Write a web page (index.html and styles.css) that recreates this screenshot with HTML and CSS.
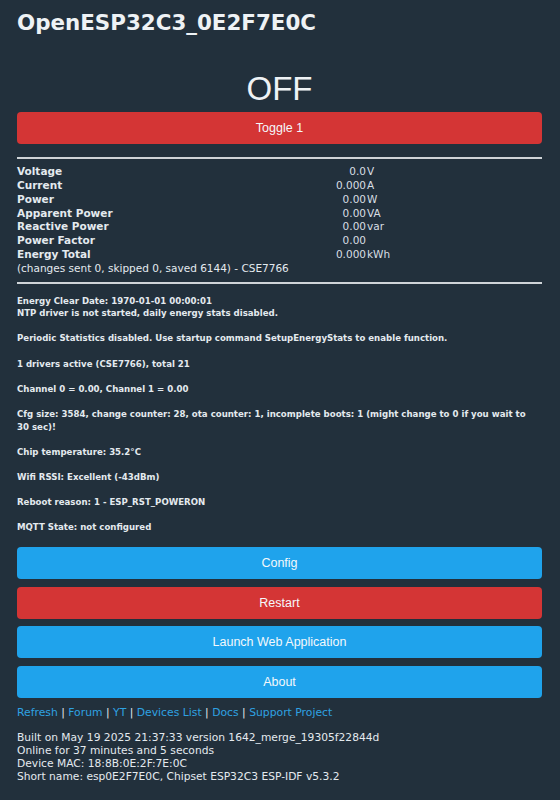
FILE: index.html
```html
<!DOCTYPE html>
<html lang="en">
<head>
<meta charset="utf-8">
<title>OpenESP32C3_0E2F7E0C</title>
<link rel="stylesheet" href="styles.css">
</head>
<body>
<div class="page">
  <h1 class="title">OpenESP32C3_0E2F7E0C</h1>
  <div class="state">OFF</div>
  <button class="btn btn-red toggle">Toggle 1</button>
  <hr class="rule rule-top">
  <div class="energy">
    <b class="lbl">Voltage</b><span class="val">0.0</span><span class="unit">V</span>
    <b class="lbl">Current</b><span class="val">0.000</span><span class="unit">A</span>
    <b class="lbl">Power</b><span class="val">0.00</span><span class="unit">W</span>
    <b class="lbl">Apparent Power</b><span class="val">0.00</span><span class="unit">VA</span>
    <b class="lbl">Reactive Power</b><span class="val">0.00</span><span class="unit">var</span>
    <b class="lbl">Power Factor</b><span class="val">0.00</span><span class="unit"></span>
    <b class="lbl">Energy Total</b><span class="val">0.000</span><span class="unit">kWh</span>
    <span class="note">(changes sent 0, skipped 0, saved 6144) - CSE7766</span>
  </div>
  <hr class="rule rule-bottom">
  <div class="info">
    <p>Energy Clear Date: 1970-01-01 00:00:01<br>NTP driver is not started, daily energy stats disabled.</p>
    <p>Periodic Statistics disabled. Use startup command SetupEnergyStats to enable function.</p>
    <p>1 drivers active (CSE7766), total 21</p>
    <p>Channel 0 = 0.00, Channel 1 = 0.00</p>
    <p>Cfg size: 3584, change counter: 28, ota counter: 1, incomplete boots: 1 (might change to 0 if you wait to 30 sec)!</p>
    <p>Chip temperature: 35.2°C</p>
    <p>Wifi RSSI: Excellent (-43dBm)</p>
    <p>Reboot reason: 1 - ESP_RST_POWERON</p>
    <p>MQTT State: not configured</p>
  </div>
  <div class="actions">
    <button class="btn btn-blue">Config</button>
    <button class="btn btn-red">Restart</button>
    <button class="btn btn-blue">Launch Web Application</button>
    <button class="btn btn-blue">About</button>
  </div>
  <div class="links">
    <a href="#">Refresh</a> | <a href="#">Forum</a> | <a href="#">YT</a> | <a href="#">Devices List</a> | <a href="#">Docs</a> | <a href="#">Support Project</a>
  </div>
  <div class="footer">
    Built on May 19 2025 21:37:33 version 1642_merge_19305f22844d<br>
    Online for 37 minutes and 5 seconds<br>
    Device MAC: 18:8B:0E:2F:7E:0C<br>
    Short name: esp0E2F7E0C, Chipset ESP32C3 ESP-IDF v5.3.2
  </div>
</div>
</body>
</html>
```

FILE: styles.css
```css
html, body {
  margin: 0;
  padding: 0;
  background: #22303c;
}

body {
  color: #eaeaea;
  font-family: "DejaVu Sans", Verdana, sans-serif;
  font-size: 10.5px;
}

.page {
  padding: 10px 18px 0 17px;
  display: flex;
  flex-direction: column;
}

.title {
  margin: 0;
  font-size: 21.4px;
  line-height: 25px;
  font-weight: bold;
  color: #eef2f5;
}

.state {
  margin-top: 35px;
  text-align: center;
  font-family: "Liberation Sans", Arial, sans-serif;
  font-size: 33px;
  line-height: 38px;
  color: #eef2f5;
}

.btn {
  display: block;
  width: 100%;
  height: 32px;
  border: 0;
  border-radius: 4px;
  padding: 0;
  font-family: "Liberation Sans", Arial, sans-serif;
  font-size: 12.5px;
  color: #f4f8fb;
  cursor: pointer;
}

.btn-red {
  background: #d43535;
}

.btn-blue {
  background: #1fa3ec;
}

.toggle {
  margin-top: 4px;
}

.rule {
  width: 100%;
  margin: 0;
  border: 0;
  height: 2px;
  background: #cfd4d8;
}

.rule-top {
  margin-top: 13px;
}

.rule-bottom {
  margin-top: 6px;
}

.energy {
  margin-top: 6px;
  display: grid;
  grid-template-columns: 284px 66px 1fr;
  column-gap: 0;
  line-height: 13.86px;
}

.lbl {
  font-weight: bold;
  color: #e4eaef;
}

.val {
  text-align: right;
  padding-right: 1px;
  color: #d8dee3;
}

.unit {
  color: #d8dee3;
}

.note {
  grid-column: 1 / -1;
  color: #e4eaef;
}

.info {
  margin-top: 10.7px;
  padding-right: 8px;
  font-size: 8.6px;
  font-weight: bold;
  line-height: 12.6px;
  color: #e4eaef;
}

.info p {
  margin: 0 0 12.6px 0;
}

.actions {
  margin-top: 1px;
  display: flex;
  flex-direction: column;
  gap: 7.5px;
}

.links {
  margin-top: 8px;
  font-size: 10.8px;
  line-height: 13px;
  color: #e4eaef;
}

.links a {
  color: #2fa2e2;
  text-decoration: none;
}

.footer {
  margin-top: 12px;
  font-size: 10.7px;
  line-height: 13px;
  color: #e4eaef;
}
```
